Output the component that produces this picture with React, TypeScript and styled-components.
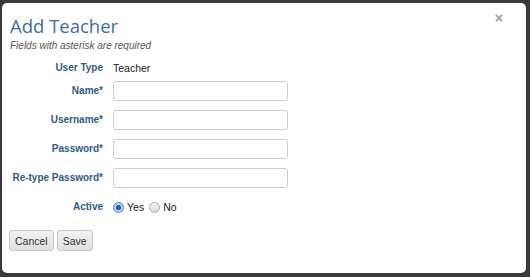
import { createGlobalStyle, styled } from 'styled-components';

const GlobalStyle = createGlobalStyle`
  html, body {
    margin: 0;
    padding: 0;
    background: #3a3a3a;
  }
`;

const FIELDS = ['Name*', 'Username*', 'Password*', 'Re-type Password*'];

const App = () => {
  return (
    <Frame>
      <GlobalStyle />
      <Modal>
        <CloseButton aria-label="close">×</CloseButton>
        <Title>Add Teacher</Title>
        <Hint>Fields with asterisk are required</Hint>

        <Form>
          <Label $h={23}>User Type</Label>
          <Value>Teacher</Value>

          {FIELDS.map((field) => (
            <FieldRow key={field}>
              <Label $h={29}>{field}</Label>
              <Input type={field.includes('Password') ? 'password' : 'text'} />
            </FieldRow>
          ))}

          <Label $h={26}>Active</Label>
          <Radios>
            <RadioLabel>
              <Radio $checked />
              Yes
            </RadioLabel>
            <RadioLabel>
              <Radio />
              No
            </RadioLabel>
          </Radios>
        </Form>

        <Actions>
          <Button>Cancel</Button>
          <Button>Save</Button>
        </Actions>
      </Modal>
    </Frame>
  );
};

export default App;

const Frame = styled.div`
  width: 530px;
  height: 277px;
  box-sizing: border-box;
  padding: 3px 4px 4px 2px;
  background: #3a3a3a;
`;

const Modal = styled.div`
  position: relative;
  height: 100%;
  box-sizing: border-box;
  background: #fff;
  border-radius: 5px;
  padding: 10px 8px 0 8px;
  font-family: 'Liberation Sans', Arial, sans-serif;
`;

const CloseButton = styled.span`
  position: absolute;
  top: 7px;
  right: 23px;
  color: #999;
  font-size: 14px;
  font-weight: 700;
  line-height: 16px;
`;

const Title = styled.h1`
  margin: 0;
  font-family: 'Open Sans', 'Liberation Sans', sans-serif;
  font-weight: 400;
  font-size: 18.5px;
  line-height: 26px;
  color: #3b6ea5;
`;

const Hint = styled.div`
  font-size: 10px;
  font-style: italic;
  line-height: 13px;
  color: #555;
`;

const Form = styled.div`
  display: grid;
  grid-template-columns: 93px 175px;
  column-gap: 10px;
  margin-top: 6px;
  align-items: start;
`;

const FieldRow = styled.div`
  display: contents;
`;

const Label = styled.div<{ $h: number }>`
  height: ${(p) => p.$h}px;
  line-height: 20px;
  text-align: right;
  white-space: nowrap;
  font-size: 10px;
  font-weight: 700;
  color: #2c5b8f;
`;

const Value = styled.div`
  height: 20px;
  line-height: 20px;
  font-size: 10.5px;
  color: #222;
`;

const Input = styled.input`
  box-sizing: border-box;
  width: 175px;
  height: 20px;
  margin: 0;
  border: 1px solid #ccc;
  border-radius: 3px;
  background: #fff;
  padding: 2px 5px;
  outline: none;
`;

const Radios = styled.div`
  display: flex;
  align-items: center;
  gap: 5px;
  height: 20px;
  font-size: 10.5px;
  color: #222;
`;

const RadioLabel = styled.label`
  display: flex;
  align-items: center;
  gap: 3px;
`;

const Radio = styled.span<{ $checked?: boolean }>`
  width: 9px;
  height: 9px;
  border-radius: 50%;
  border: 1px solid ${(p) => (p.$checked ? '#4d7fb8' : '#aaa')};
  background: ${(p) =>
    p.$checked
      ? 'radial-gradient(circle, #1f66b5 0 2.5px, #bcd6f0 3px 100%)'
      : 'linear-gradient(#f4f4f4, #dcdcdc)'};
`;

const Actions = styled.div`
  display: flex;
  gap: 3px;
  margin-top: 7px;
  margin-left: -1px;
`;

const Button = styled.button`
  height: 21px;
  padding: 0 5px;
  font-family: 'Liberation Sans', Arial, sans-serif;
  font-size: 10.5px;
  color: #333;
  border: 1px solid #c6c6c6;
  border-radius: 3px;
  background: linear-gradient(#f2f2f2, #e0e0e0);
`;
